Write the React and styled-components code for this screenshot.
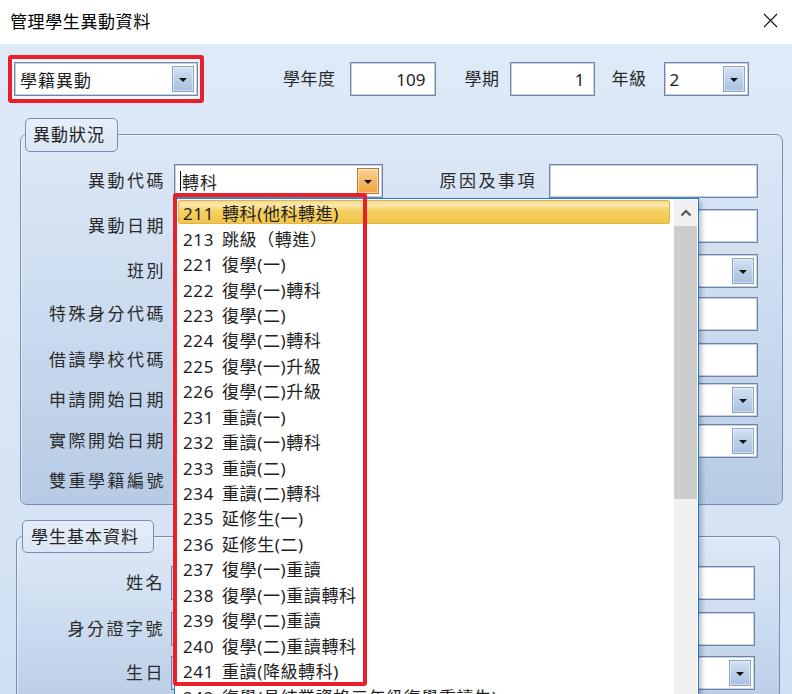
import React from "react";
import styled, { createGlobalStyle } from "styled-components";

const FONT = `"Noto Sans", "Noto Sans CJK TC", sans-serif`;

const GlobalStyle = createGlobalStyle`
  html, body { margin: 0; padding: 0; background: #fff; }
  body { font-family: ${FONT}; color: #222; }
  * { box-sizing: border-box; }
`;

const Window = styled.div`
  position: relative;
  width: 792px;
  height: 694px;
  overflow: hidden;
  display: flex;
  flex-direction: column;
  background: #fff;
`;

const TitleBar = styled.div`
  height: 44px;
  flex-shrink: 0;
  display: flex;
  align-items: center;
  justify-content: space-between;
  padding: 0 14px 4px 10px;
  background: #fff;
`;

const Title = styled.div`
  font-size: 17px;
  letter-spacing: 0.6px;
  color: #000;
`;

const CloseIcon = styled.svg`
  width: 15px;
  height: 15px;
  display: block;
`;

const Body = styled.div`
  flex: 1;
  padding: 11px 9px 0 8px;
  background: linear-gradient(180deg, #dfeaf8 0%, #d9e6f6 50%, #cfdef2 100%);
`;

const TopRow = styled.div`
  display: flex;
  align-items: center;
`;

const Highlight = styled.div`
  border: 4px solid #e8202a;
  border-radius: 3px;
  padding: 3px 2px;
  background: #f4f7fb;
`;

const Label = styled.span`
  font-size: 17px;
  line-height: 20px;
  letter-spacing: ${p => p.$spacing ?? 0.5}px;
  color: #2a2a2a;
  margin-left: ${p => p.$ml || 0}px;
  white-space: nowrap;
`;

const FieldLabel = styled(Label)`
  text-align: right;
  letter-spacing: 2.5px;
`;

const Input = styled.div`
  width: ${p => (p.$width ? `${p.$width}px` : "auto")};
  height: 34px;
  margin-left: ${p => p.$ml || 0}px;
  flex: ${p => (p.$width ? "none" : 1)};
  background: #fff;
  border: 1px solid #6f84a9;
  box-shadow: inset 0 0 0 1px #c5d1e3;
  display: flex;
  align-items: center;
  justify-content: flex-end;
  padding-right: 9px;
  font-size: 17px;
`;

const ComboBox = styled.div`
  width: ${p => (p.$width ? `${p.$width}px` : "auto")};
  flex: ${p => (p.$width ? "none" : 1)};
  margin-left: ${p => p.$ml || 0}px;
  height: 34px;
  background: #fff;
  border: 1px solid #6f84a9;
  box-shadow: inset 0 0 0 1px #c5d1e3;
  display: flex;
  align-items: stretch;
  padding: 3px 3px 3px 5px;
`;

const ComboValue = styled.div`
  flex: 1;
  display: flex;
  align-items: center;
  font-size: 17px;
  letter-spacing: 1px;
  color: #1e1e1e;
  white-space: nowrap;
`;

const Caret = styled.span`
  width: 1px;
  height: 20px;
  background: #000;
  margin-right: 1px;
`;

const DropButton = styled.div`
  width: 22px;
  border: 1px solid ${p => (p.$accent ? "#b77b36" : "#8aa4c8")};
  background: ${p =>
    p.$accent
      ? "linear-gradient(180deg, #fbd29a 0%, #f6b764 50%, #f2a344 100%)"
      : "linear-gradient(180deg, #d3e1f2 0%, #bcd0ea 50%, #a9c1e0 100%)"};
  box-shadow: inset 0 0 0 1px rgba(255, 255, 255, 0.45);
  display: flex;
  align-items: center;
  justify-content: center;
  padding-top: 2px;
  &::after {
    content: "";
    border-left: 4px solid transparent;
    border-right: 4px solid transparent;
    border-top: 4px solid #111;
  }
`;

const GroupBox = styled.section`
  display: flex;
  flex-direction: column;
  align-items: flex-start;
  margin: ${p => p.$margin};
`;

const Legend = styled.div`
  position: relative;
  z-index: 1;
  height: ${p => p.$height}px;
  margin-left: ${p => p.$offset}px;
  margin-bottom: -${p => p.$overlap}px;
  padding: 0 ${p => p.$padRight}px 0 ${p => p.$padLeft}px;
  border: 1px solid #7a8db0;
  border-radius: 5px;
  background: linear-gradient(180deg, #e7eefa 0%, #dae5f5 100%);
  font-size: 17px;
  line-height: ${p => p.$height - 2}px;
  letter-spacing: 1px;
  color: #222;
`;

const Frame = styled.div`
  align-self: stretch;
  border: 1px solid #7a8db0;
  border-radius: 7px;
  background: linear-gradient(180deg, #dde8f7 0%, #cbdbef 50%, #b7cbe5 100%);
  box-shadow: inset 1px 1px 0 rgba(255, 255, 255, 0.5);
  display: flex;
  flex-direction: column;
  padding: ${p => p.$pad};
`;

const FormRow = styled.div`
  display: grid;
  grid-template-columns: ${p => p.$labelWidth}px 1fr;
  column-gap: ${p => p.$gap}px;
  align-items: center;
  margin-top: ${p => p.$mt || 0}px;
  height: 34px;
`;

const Controls = styled.div`
  display: flex;
  align-items: center;
`;

const Spacer = styled(FieldLabel)`
  flex: 1;
  margin-right: 12px;
`;

const DropList = styled.div`
  position: absolute;
  left: 174px;
  top: 198px;
  width: 525px;
  height: 540px;
  z-index: 5;
  background: #fff;
  border: 1px solid #1b7fd8;
  box-shadow: 3px 3px 4px rgba(0, 0, 0, 0.22);
  display: flex;
  padding: 1px 1px 0 3px;
`;

const Items = styled.div`
  flex: 1;
  margin-right: 4px;
  display: flex;
  flex-direction: column;
`;

const Item = styled.div`
  height: 25.44px;
  flex-shrink: 0;
  display: flex;
  align-items: center;
  padding-left: 4px;
  font-size: 17px;
  letter-spacing: 0.6px;
  word-spacing: 3px;
  color: #1e1e1e;
  white-space: nowrap;
  border: 1px solid transparent;
  border-radius: 2px;
  ${p =>
    p.$active &&
    `
    height: 24px;
    margin-bottom: 1.44px;
    border-color: #e0b44c;
    background: linear-gradient(180deg, #f5d98a 0%, #fbe8ae 18%, #f4d063 45%, #f1c54a 100%);
  `}
`;

const ScrollBar = styled.div`
  width: 23px;
  display: flex;
  flex-direction: column;
  background: #f0f0f0;
`;

const ScrollUp = styled.div`
  height: 26px;
  display: flex;
  align-items: center;
  justify-content: center;
`;

const Thumb = styled.div`
  height: 273px;
  background: #cdcdcd;
`;

const Annotation = styled.div`
  position: absolute;
  left: 173px;
  top: 193px;
  width: 194px;
  height: 493px;
  z-index: 6;
  border: 4px solid #e8202a;
  border-radius: 3px;
  pointer-events: none;
`;

const codes = [
  "211 轉科(他科轉進)",
  "213 跳級（轉進）",
  "221 復學(一)",
  "222 復學(一)轉科",
  "223 復學(二)",
  "224 復學(二)轉科",
  "225 復學(一)升級",
  "226 復學(二)升級",
  "231 重讀(一)",
  "232 重讀(一)轉科",
  "233 重讀(二)",
  "234 重讀(二)轉科",
  "235 延修生(一)",
  "236 延修生(二)",
  "237 復學(一)重讀",
  "238 復學(一)重讀轉科",
  "239 復學(二)重讀",
  "240 復學(二)重讀轉科",
  "241 重讀(降級轉科)",
  "242 復學(具結業資格三年級復學重讀生)",
];

const statusRows = [
  { label: "異動日期", kind: "input", mt: 11 },
  { label: "班別", kind: "combo", mt: 11 },
  { label: "特殊身分代碼", kind: "input", mt: 9 },
  { label: "借讀學校代碼", kind: "input", mt: 12 },
  { label: "申請開始日期", kind: "combo", mt: 6 },
  { label: "實際開始日期", kind: "combo", mt: 7 },
  { label: "雙重學籍編號", kind: "short", mt: 6 },
];

const studentRows = [
  { label: "姓名", kind: "input", mt: 0 },
  { label: "身分證字號", kind: "input", mt: 12 },
  { label: "生日", kind: "combo", mt: 10 },
];

const Control = ({ kind }) => {
  if (kind === "combo")
    return (
      <ComboBox>
        <ComboValue />
        <DropButton />
      </ComboBox>
    );
  if (kind === "short") return <Input $width={180} />;
  return <Input />;
};

export default function App() {
  return (
    <Window>
      <GlobalStyle />
      <TitleBar>
        <Title>管理學生異動資料</Title>
        <CloseIcon viewBox="0 0 15 15">
          <path d="M1 1 L14 14 M14 1 L1 14" stroke="#111" strokeWidth="1.1" fill="none" />
        </CloseIcon>
      </TitleBar>

      <Body>
        <TopRow>
          <Highlight>
            <ComboBox $width={184}>
              <ComboValue>學籍異動</ComboValue>
              <DropButton />
            </ComboBox>
          </Highlight>
          <Label $ml={79}>學年度</Label>
          <Input $width={86} $ml={14}>109</Input>
          <Label $ml={29}>學期</Label>
          <Input $width={85} $ml={10}>1</Input>
          <Label $ml={17}>年級</Label>
          <ComboBox $width={85} $ml={17}>
            <ComboValue>2</ComboValue>
            <DropButton />
          </ComboBox>
        </TopRow>

        <GroupBox $margin="15px 0 0 12px">
          <Legend $height={34} $offset={5} $overlap={18} $padLeft={7} $padRight={12}>
            異動狀況
          </Legend>
          <Frame $pad="29px 24px 6px 0">
            <FormRow $labelWidth={145} $gap={8}>
              <FieldLabel>異動代碼</FieldLabel>
              <Controls>
                <ComboBox $width={209}>
                  <ComboValue>
                    <Caret />
                    轉科
                  </ComboValue>
                  <DropButton $accent />
                </ComboBox>
                <Spacer>原因及事項</Spacer>
                <Input $width={209} />
              </Controls>
            </FormRow>
            {statusRows.map(r => (
              <FormRow key={r.label} $labelWidth={145} $gap={8} $mt={r.mt}>
                <FieldLabel>{r.label}</FieldLabel>
                <Controls>
                  <Control kind={r.kind} />
                </Controls>
              </FormRow>
            ))}
          </Frame>
        </GroupBox>

        <GroupBox $margin="15px 3px 0 8px">
          <Legend $height={33} $offset={6} $overlap={17} $padLeft={8} $padRight={14}>
            學生基本資料
          </Legend>
          <Frame $pad="29px 24px 30px 0">
            {studentRows.map(r => (
              <FormRow key={r.label} $labelWidth={148} $gap={6} $mt={r.mt}>
                <FieldLabel>{r.label}</FieldLabel>
                <Controls>
                  <Control kind={r.kind} />
                </Controls>
              </FormRow>
            ))}
          </Frame>
        </GroupBox>
      </Body>

      <DropList>
        <Items>
          {codes.map((c, i) => (
            <Item key={c} $active={i === 0}>
              {c}
            </Item>
          ))}
        </Items>
        <ScrollBar>
          <ScrollUp>
            <svg width="12" height="8" viewBox="0 0 12 8">
              <path d="M1.5 6.5 L6 2 L10.5 6.5" stroke="#555" strokeWidth="2.2" fill="none" />
            </svg>
          </ScrollUp>
          <Thumb />
        </ScrollBar>
      </DropList>
      <Annotation />
    </Window>
  );
}
